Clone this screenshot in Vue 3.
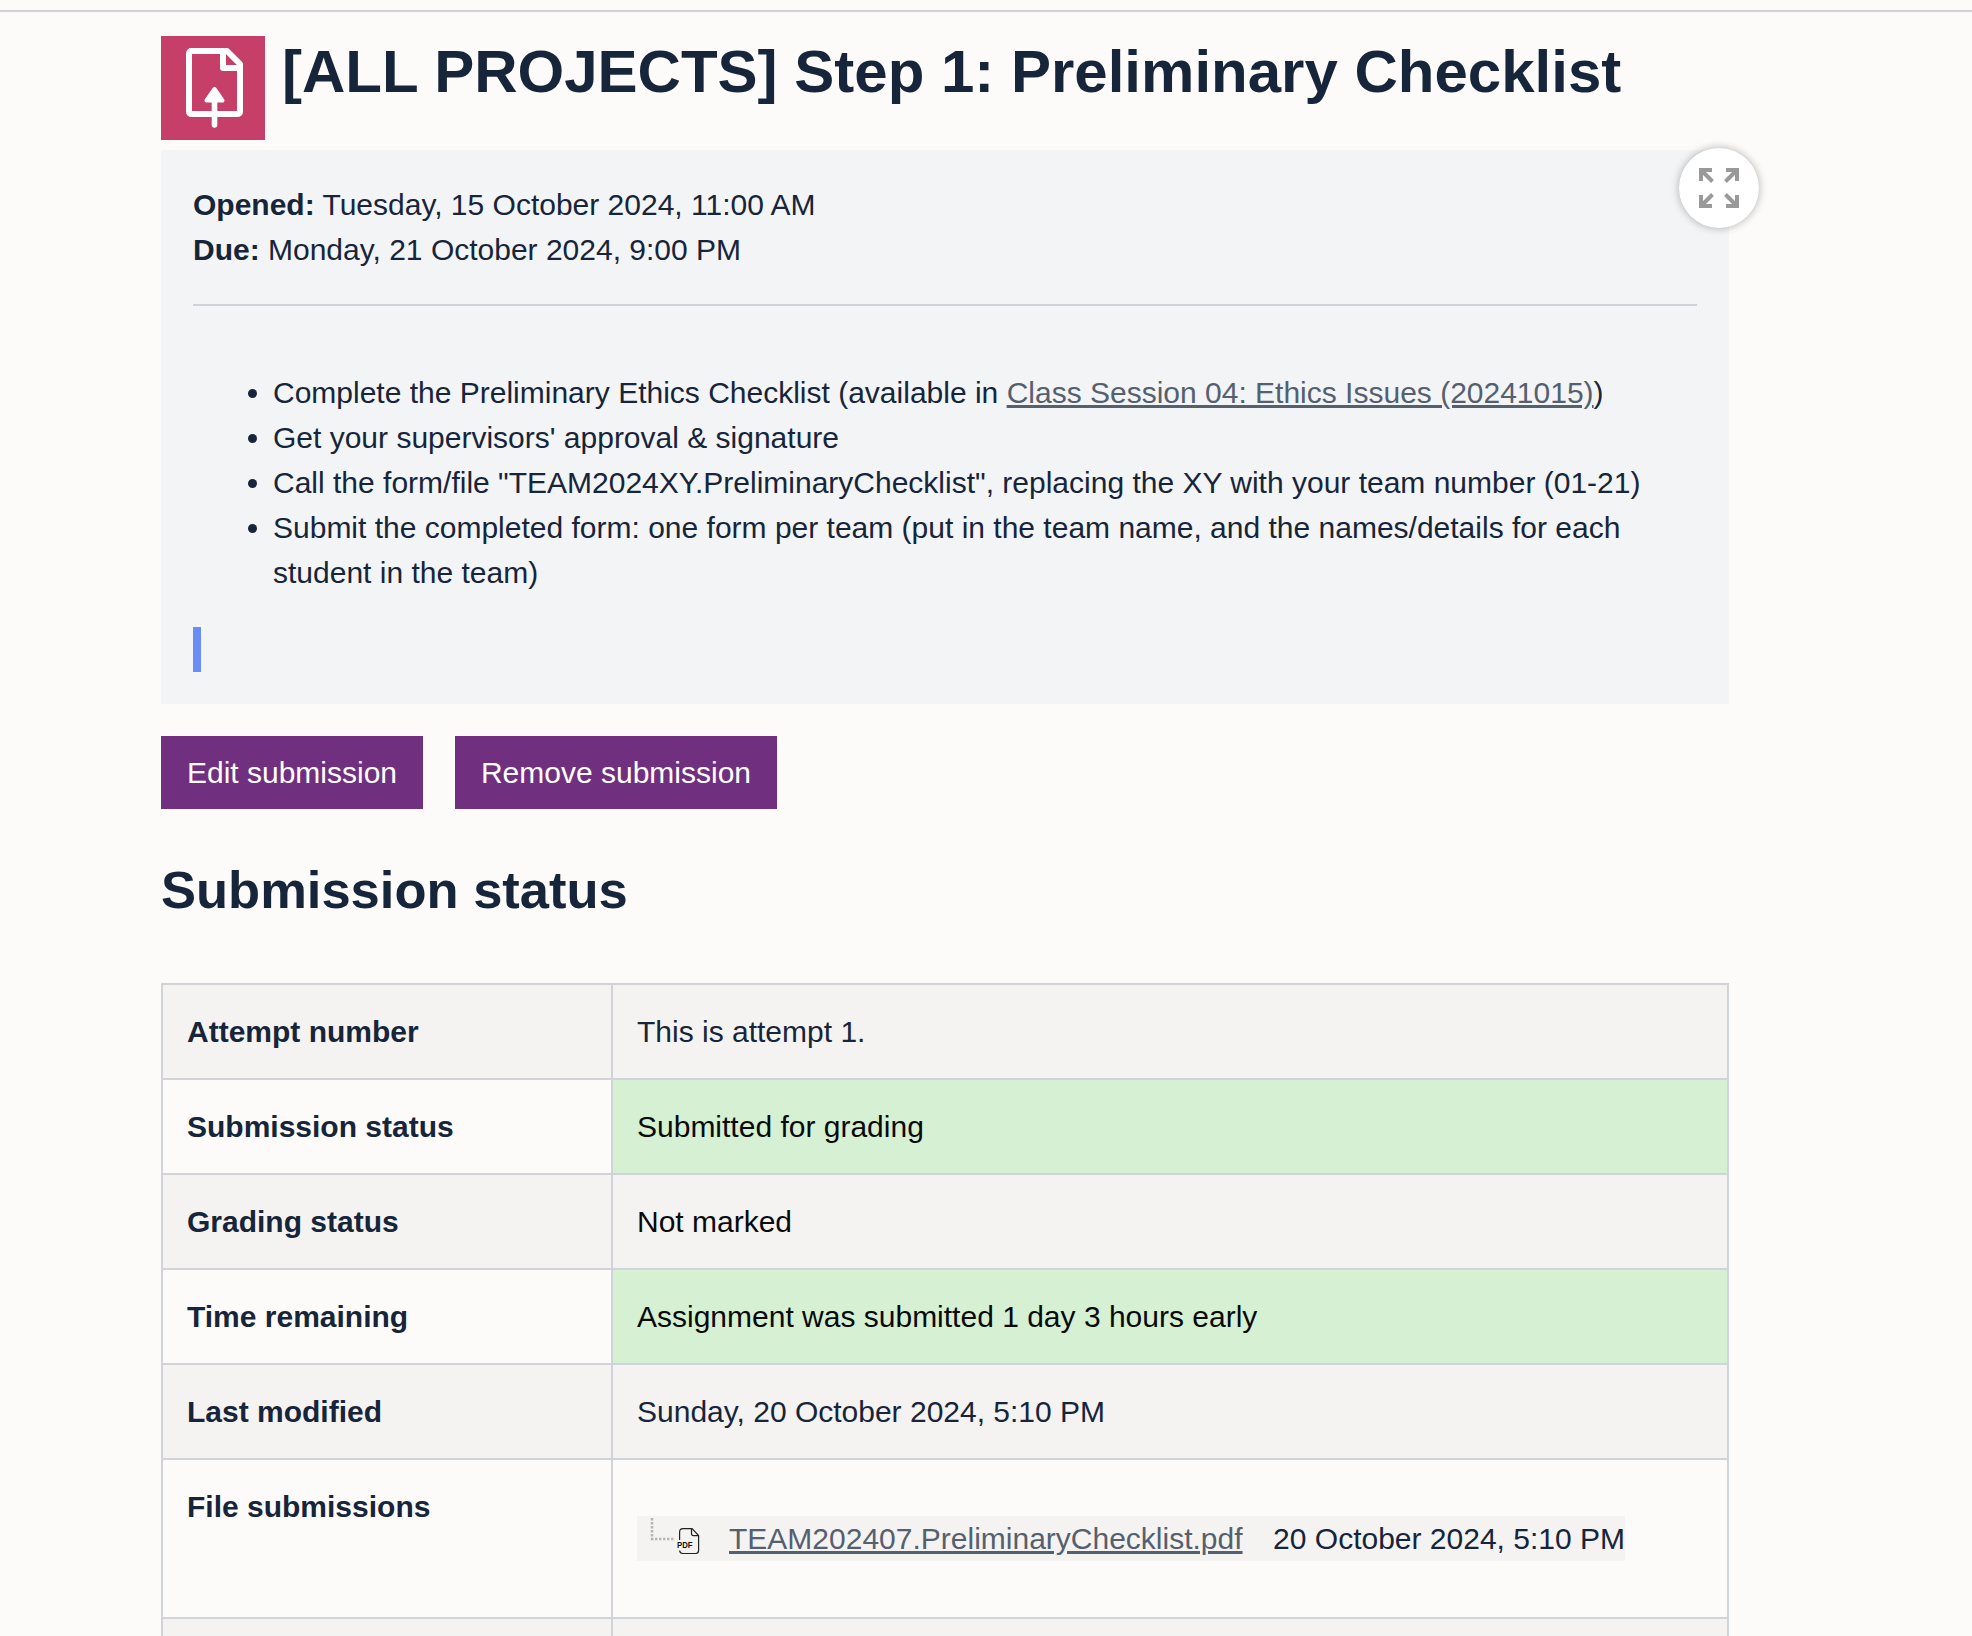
<script setup>
const tasks = [
  `Get your supervisors' approval & signature`,
  `Call the form/file "TEAM2024XY.PreliminaryChecklist", replacing the XY with your team number (01-21)`,
  `Submit the completed form: one form per team (put in the team name, and the names/details for each student in the team)`,
]
const rows = [
  { label: 'Attempt number', value: 'This is attempt 1.' },
  { label: 'Submission status', value: 'Submitted for grading', kind: 'ok' },
  { label: 'Grading status', value: 'Not marked', kind: 'plain' },
  { label: 'Time remaining', value: 'Assignment was submitted 1 day 3 hours early', kind: 'ok' },
  { label: 'Last modified', value: 'Sunday, 20 October 2024, 5:10 PM' },
]
</script>

<template>
  <div class="page">
    <main class="content">
      <header class="title-row">
        <div class="activity-icon">
          <svg viewBox="0 0 104 104" width="104" height="104" fill="none" stroke="#fff" stroke-width="6" stroke-linejoin="round">
            <path d="M28 15H66L79 28V75Q79 78 76 78H31Q28 78 28 75V18Q28 15 31 15" />
            <path d="M62 15V32H79" />
            <path d="M53.500 60V89" stroke-linecap="round" stroke-width="5.600" />
            <path d="M53.500 53L61.500 64.500H45.500Z" fill="#fff" stroke-width="4" />
          </svg>
        </div>
        <h1>[ALL PROJECTS] Step 1: Preliminary Checklist</h1>
      </header>

      <section class="card">
        <button class="expand" aria-label="Expand">
          <svg viewBox="0 0 40 40" width="40" height="40" fill="none" stroke="#999" stroke-width="4">
            <path d="M13 2H2V13M2.500 2.500L13.500 13.500" />
            <path d="M27 2H38V13M37.500 2.500L26.500 13.500" />
            <path d="M13 38H2V27M2.500 37.500L13.500 26.500" />
            <path d="M27 38H38V27M37.500 37.500L26.500 26.500" />
          </svg>
        </button>
        <div><strong>Opened:</strong> Tuesday, 15 October 2024, 11:00 AM</div>
        <div><strong>Due:</strong> Monday, 21 October 2024, 9:00 PM</div>
        <hr />
        <ul>
          <li>Complete the Preliminary Ethics Checklist (available in <a href="#">Class Session 04: Ethics Issues (20241015)</a>)</li>
          <li v-for="t in tasks" :key="t">{{ t }}</li>
        </ul>
        <div class="marker"></div>
      </section>

      <div class="actions">
        <button class="btn edit">Edit submission</button>
        <button class="btn remove">Remove submission</button>
      </div>

      <h2>Submission status</h2>

      <div class="table">
        <div v-for="r in rows" :key="r.label" class="row">
          <div class="label">{{ r.label }}</div>
          <div class="value" :class="r.kind">{{ r.value }}</div>
        </div>
        <div class="row files">
          <div class="label">File submissions</div>
          <div class="value">
            <div class="file">
              <svg class="tree" viewBox="0 0 92 45" width="92" height="45" fill="none">
                <path d="M15 2V24" stroke="#b5b4b3" stroke-width="2.500" stroke-dasharray="2.400 1.600" />
                <path d="M14 23H37" stroke="#b5b4b3" stroke-width="2.500" stroke-dasharray="2.400 1.600" />
                <g stroke="#222" stroke-width="1.200">
                  <path d="M42.600 24V16Q42.600 12.600 46 12.600H55L61.600 19.500V34.500Q61.600 37.500 58.600 37.500H46Q42.800 37.500 42.600 34.500" />
                  <path d="M54.500 12.600V17.500Q54.500 19.700 56.700 19.700H61.600" />
                </g>
                <text x="40" y="31.800" font-size="8.600" font-weight="700" fill="#111" textLength="15.500" lengthAdjust="spacingAndGlyphs">PDF</text>
              </svg>
              <a href="#">TEAM202407.PreliminaryChecklist.pdf</a>
              <span class="date">20 October 2024, 5:10 PM</span>
            </div>
          </div>
        </div>
        <div class="row last"><div class="label"></div><div class="value"></div></div>
      </div>
    </main>
  </div>
</template>

<style>
body { background: #fdfbf9; }
</style>

<style scoped>
.page {
  box-sizing: border-box;
  height: 1636px;
  overflow: hidden;
  padding-top: 10px;
  background: #fdfbf9;
  color: #17253a;
  font: 30px/45px "Liberation Sans", Arial, sans-serif;
}
.page * { box-sizing: border-box; }
.content {
  border-top: 2px solid #d0d1d9;
  padding: 24px 243px 0 161px;
}
.title-row { display: flex; gap: 16px; height: 114px; }
.activity-icon { width: 104px; height: 104px; background: #c63f69; }
.activity-icon svg { display: block; }
h1 {
  margin: 0;
  padding-left: 1px;
  font-size: 60px;
  line-height: 72px;
  white-space: nowrap;
}
.card {
  position: relative;
  height: 554px;
  padding: 32px;
  background: #f3f4f6;
}
.expand {
  position: absolute;
  right: -30px;
  top: -2px;
  width: 80px;
  height: 80px;
  padding: 20px;
  border: 0;
  border-radius: 50%;
  background: #fff;
  box-shadow: 0 0 8px rgba(0, 0, 0, 0.3);
}
.expand svg { display: block; }
hr { margin: 32px 0 64px; border: 0; height: 2px; background: #d0d2d9; }
ul { margin: 0; padding-left: 80px; }
a {
  color: #55606f;
  text-decoration: underline;
  text-decoration-thickness: 3px;
  text-underline-offset: 2px;
}
.marker { width: 8px; height: 45px; margin-top: 32px; background: #6b8cf5; }
.actions { display: flex; gap: 32px; margin-top: 32px; }
.btn {
  height: 73px;
  padding: 0;
  border: 0;
  background: #712f80;
  color: #fff;
  font: inherit;
  text-align: center;
}
.edit { width: 262px; }
.remove { width: 322px; }
h2 {
  margin: 48px 0 60px;
  font-size: 52.5px;
  line-height: 66px;
}
.table { border: solid #d0d3d7; border-width: 2px 2px 0; }
.row {
  display: grid;
  grid-template-columns: 450px 1fr;
  height: 95px;
  border-bottom: 2px solid #d0d3d7;
}
.row:nth-child(odd) { background: #f5f3f2; }
.label { padding: 24px; font-weight: 700; border-right: 2px solid #d0d3d7; }
.value { padding: 24px; }
.ok { background: #d5f0d2; color: #0a0a0a; }
.plain { color: #0a0a0a; }
.files { height: 159px; }
.files .value { padding-top: 56px; }
.file {
  display: flex;
  width: 988px;
  height: 45px;
  background: #f5f3f2;
  white-space: nowrap;
}
.tree { flex: none; }
.date { margin-left: auto; }
</style>
